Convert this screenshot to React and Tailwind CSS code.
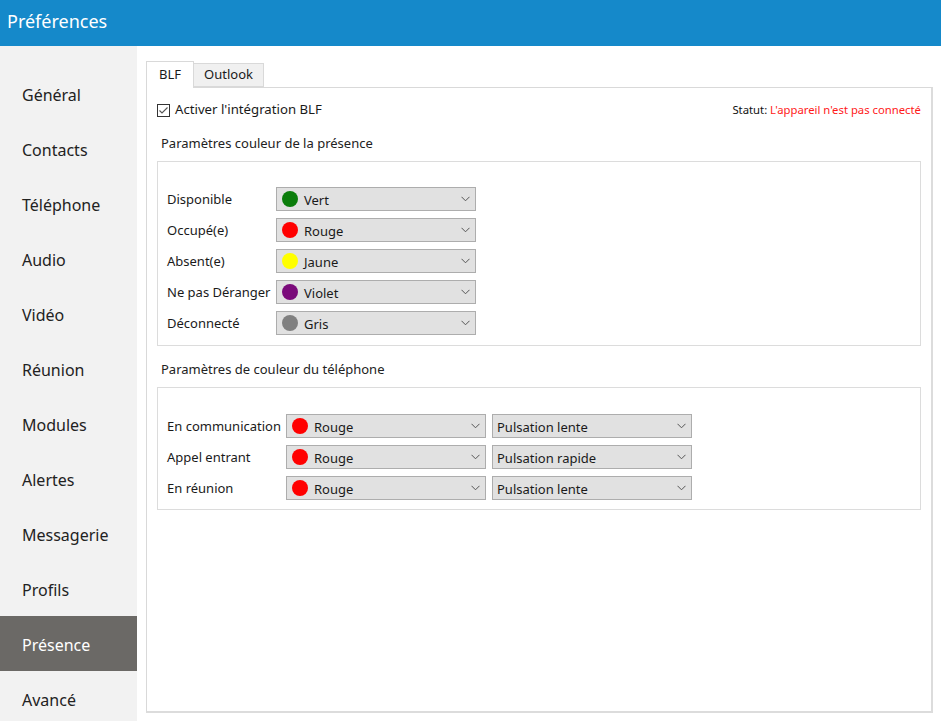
import React from "react";

const FONT = { fontFamily: '"Noto Sans", "Open Sans", sans-serif' };

function Chevron() {
  return (
    <svg width="9" height="6" viewBox="0 0 9 6" className="shrink-0">
      <path d="M0.5 0.8 L4.5 4.8 L8.5 0.8" fill="none" stroke="#555" strokeWidth="1" />
    </svg>
  );
}

function Select({ color, label }) {
  return (
    <div className="w-[200px] h-[24px] bg-[#e1e1e1] border border-[#adadad] flex items-center pl-[4px] pr-[5px]">
      {color && <span className="w-[16px] h-[16px] rounded-full shrink-0 ml-[1px] mr-[6px]" style={{ background: color }} />}
      <span className="flex-1 text-[13px] text-[#1a1a1a] leading-none pt-[2px]">{label}</span>
      <Chevron />
    </div>
  );
}

const nav = ["Général", "Contacts", "Téléphone", "Audio", "Vidéo", "Réunion", "Modules", "Alertes", "Messagerie", "Profils", "Présence", "Avancé"];

const presence = [
  ["Disponible", "#0b7d0b", "Vert"],
  ["Occupé(e)", "#ff0000", "Rouge"],
  ["Absent(e)", "#ffff00", "Jaune"],
  ["Ne pas Déranger", "#7a0a7a", "Violet"],
  ["Déconnecté", "#808080", "Gris"],
];

const phone = [
  ["En communication", "Pulsation lente"],
  ["Appel entrant", "Pulsation rapide"],
  ["En réunion", "Pulsation lente"],
];

export default function App() {
  return (
    <div className="w-[941px] h-[721px] flex flex-col overflow-hidden bg-white" style={FONT}>
      <div className="h-[46px] bg-[#1589ca] flex items-center pl-[7px] pb-[4px] shrink-0">
        <span className="text-white text-[18px]">Préférences</span>
      </div>
      <div className="flex flex-1 min-h-0">
        <div className="w-[137px] bg-[#f2f2f2] pt-[20px] shrink-0">
          {nav.map((n) => (
            <div
              key={n}
              className={`h-[55px] flex items-center pl-[22px] pt-[3px] text-[16px] ${n === "Présence" ? "bg-[#6b6966] text-white" : "text-[#222]"}`}
            >
              {n}
            </div>
          ))}
        </div>
        <div className="flex-1 flex flex-col pl-[9px] pr-[8px] pt-[15px] pb-[8px]">
          <div className="flex items-end h-[26px] shrink-0 relative z-10">
            <div className="w-[48px] h-[27px] bg-white border border-[#d9d9d9] border-b-0 flex items-center justify-center text-[13px] text-[#1a1a1a] mb-[-1px]">
              BLF
            </div>
            <div className="w-[70px] h-[24px] bg-[#f0f0f0] border border-[#d9d9d9] border-l-0 flex items-center justify-center text-[13px] text-[#1a1a1a]">
              Outlook
            </div>
          </div>
          <div className="flex-1 border border-[#d9d9d9] border-r-2 border-r-[#dcdcdc] border-b-2 border-b-[#dcdcdc] px-[10px] pt-[12px]">
            <div className="h-[20px] flex items-center">
              <svg width="13" height="13" viewBox="0 0 13 13" className="shrink-0">
                <rect x="0.5" y="0.5" width="12" height="12" fill="white" stroke="#333" />
                <path d="M2.5 6.5 L5 9 L10.5 3.5" fill="none" stroke="#555" strokeWidth="1.1" />
              </svg>
              <span className="ml-[5px] text-[13.2px] text-[#1a1a1a]">Activer l'intégration BLF</span>
              <span className="ml-auto text-[11.3px] text-[#111]">
                Statut: <span className="text-[#ff1a1a]">L'appareil n'est pas connecté</span>
              </span>
            </div>
            <div className="h-[20px] mt-[13px] pl-[4px] pt-[2px] flex items-center text-[13px] text-[#222]">
              Paramètres couleur de la présence
            </div>
            <div className="mt-[8px] border border-[#dcdcdc] pl-[9px] pt-[25px] pb-[10px] flex flex-col gap-[7px]">
              {presence.map(([l, c, v]) => (
                <div key={l} className="flex items-center">
                  <span className="w-[109px] text-[13px] text-[#1a1a1a] whitespace-nowrap pt-[2px]">{l}</span>
                  <Select color={c} label={v} />
                </div>
              ))}
            </div>
            <div className="h-[20px] mt-[13px] pl-[4px] pt-[2px] flex items-center text-[13px] text-[#222]">
              Paramètres de couleur du téléphone
            </div>
            <div className="mt-[8px] border border-[#dcdcdc] pl-[9px] pt-[26px] pb-[9px] flex flex-col gap-[7px]">
              {phone.map(([l, p]) => (
                <div key={l} className="flex items-center">
                  <span className="w-[119px] text-[13px] text-[#1a1a1a] whitespace-nowrap pt-[2px]">{l}</span>
                  <Select color="#ff0000" label="Rouge" />
                  <div className="w-[6px]" />
                  <Select label={p} />
                </div>
              ))}
            </div>
          </div>
        </div>
      </div>
    </div>
  );
}
